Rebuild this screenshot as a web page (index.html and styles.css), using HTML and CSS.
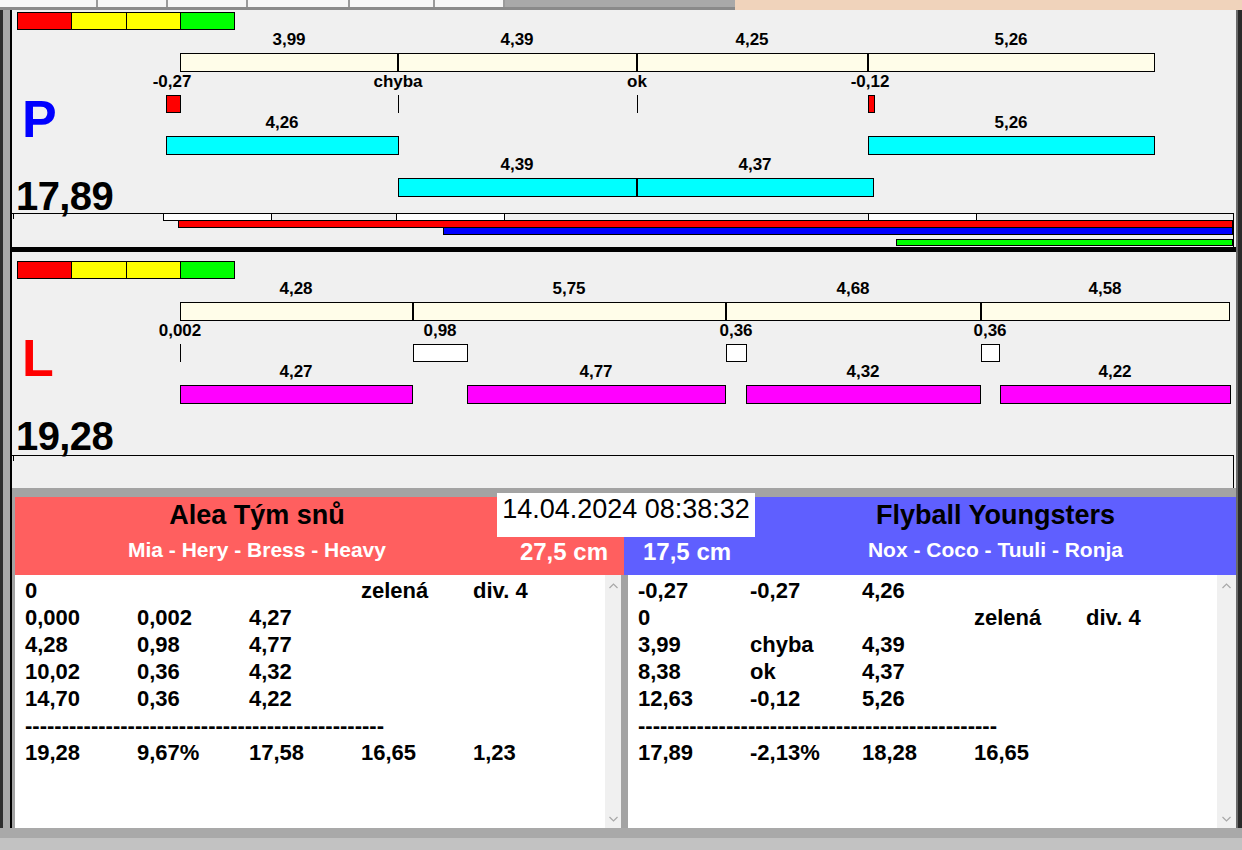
FILE: index.html
```html
<!DOCTYPE html>
<html lang="cs">
<head>
<meta charset="utf-8">
<title>Flyball</title>
<link rel="stylesheet" href="styles.css">
</head>
<body>
<div class="app">
  <div class="topbar">
    <div class="tabs">
      <div class="tab" style="width:98px"></div>
      <div class="tab" style="width:70px"></div>
      <div class="tab" style="width:80px"></div>
      <div class="tab" style="width:102px"></div>
      <div class="tab" style="width:85px"></div>
      <div class="tab" style="width:70px"></div>
      <div class="tab-rest"></div>
    </div>
    <div class="peach"></div>
  </div>

  <div class="mid">
    <div class="ledge"></div>
    <div class="main">

      <section class="lane lane-p">
        <div class="lane-body">
          <div class="legend"><span class="lg lg-red"></span><span class="lg lg-yel"></span><span class="lg lg-yel"></span><span class="lg lg-grn"></span></div>
          <div class="letter letter-p">P</div>
          <div class="time time-p">17,89</div>

          <div class="track p-a">
            <span class="lbl" style="left:277px">3,99</span>
            <span class="lbl" style="left:505px">4,39</span>
            <span class="lbl" style="left:740px">4,25</span>
            <span class="lbl" style="left:999px">5,26</span>
          </div>
          <div class="track p-cream">
            <span class="seg cream" style="left:168px;width:218px"></span>
            <span class="seg cream" style="left:386px;width:239px"></span>
            <span class="seg cream" style="left:625px;width:231px"></span>
            <span class="seg cream" style="left:856px;width:287px"></span>
          </div>
          <div class="track p-b">
            <span class="lbl" style="left:160px">-0,27</span>
            <span class="lbl" style="left:386px">chyba</span>
            <span class="lbl" style="left:625px">ok</span>
            <span class="lbl" style="left:858px">-0,12</span>
          </div>
          <div class="track p-mark">
            <span class="seg red" style="left:154px;width:15px"></span>
            <span class="tick" style="left:386px"></span>
            <span class="tick" style="left:625px"></span>
            <span class="seg red" style="left:856px;width:7px"></span>
          </div>
          <div class="track p-c">
            <span class="lbl" style="left:270px">4,26</span>
            <span class="lbl" style="left:999px">5,26</span>
          </div>
          <div class="track p-cyan1">
            <span class="seg cyan" style="left:154px;width:233px"></span>
            <span class="seg cyan" style="left:856px;width:287px"></span>
          </div>
          <div class="track p-d">
            <span class="lbl" style="left:505px">4,39</span>
            <span class="lbl" style="left:743px">4,37</span>
          </div>
          <div class="track p-cyan2">
            <span class="seg cyan" style="left:386px;width:239px"></span>
            <span class="seg cyan" style="left:625px;width:237px"></span>
          </div>
        </div>
        <div class="timeline tl-p">
          <span class="tl-tick"></span>
          <span class="tl-box" style="left:151px;width:109px"></span>
          <span class="tl-box" style="left:384px;width:109px"></span>
          <span class="tl-box" style="left:856px;width:109px"></span>
          <span class="tl-bar tl-red" style="left:166px"></span>
          <span class="tl-bar tl-blue" style="left:431px"></span>
          <span class="tl-bar tl-green" style="left:884px"></span>
        </div>
      </section>

      <div class="thick"></div>

      <section class="lane lane-l">
        <div class="lane-body">
          <div class="legend"><span class="lg lg-red"></span><span class="lg lg-yel"></span><span class="lg lg-yel"></span><span class="lg lg-grn"></span></div>
          <div class="letter letter-l">L</div>
          <div class="time time-l">19,28</div>

          <div class="track l-a">
            <span class="lbl" style="left:284px">4,28</span>
            <span class="lbl" style="left:557px">5,75</span>
            <span class="lbl" style="left:841px">4,68</span>
            <span class="lbl" style="left:1093px">4,58</span>
          </div>
          <div class="track l-cream">
            <span class="seg cream" style="left:168px;width:233px"></span>
            <span class="seg cream" style="left:401px;width:313px"></span>
            <span class="seg cream" style="left:714px;width:255px"></span>
            <span class="seg cream" style="left:969px;width:249px"></span>
          </div>
          <div class="track l-b">
            <span class="lbl" style="left:168px">0,002</span>
            <span class="lbl" style="left:428px">0,98</span>
            <span class="lbl" style="left:724px">0,36</span>
            <span class="lbl" style="left:978px">0,36</span>
          </div>
          <div class="track l-mark">
            <span class="tick" style="left:168px"></span>
            <span class="seg white" style="left:401px;width:55px"></span>
            <span class="seg white" style="left:714px;width:21px"></span>
            <span class="seg white" style="left:969px;width:19px"></span>
          </div>
          <div class="track l-c">
            <span class="lbl" style="left:284px">4,27</span>
            <span class="lbl" style="left:584px">4,77</span>
            <span class="lbl" style="left:851px">4,32</span>
            <span class="lbl" style="left:1103px">4,22</span>
          </div>
          <div class="track l-mag">
            <span class="seg magenta" style="left:168px;width:233px"></span>
            <span class="seg magenta" style="left:455px;width:259px"></span>
            <span class="seg magenta" style="left:734px;width:235px"></span>
            <span class="seg magenta" style="left:988px;width:231px"></span>
          </div>
        </div>
        <div class="timeline tl-l">
          <span class="tl-tick"></span>
        </div>
      </section>

      <div class="graysep"></div>

      <div class="heads">
        <div class="head head-red">
          <div class="team-name">Alea Tým snů</div>
          <div class="members">Mia - Hery - Bress - Heavy</div>
          <div class="cm cm-red">27,5 cm</div>
        </div>
        <div class="head head-blue">
          <div class="team-name">Flyball Youngsters</div>
          <div class="cm cm-blue">17,5 cm</div>
          <div class="members">Nox - Coco - Tuuli - Ronja</div>
        </div>
        <div class="datebox">14.04.2024 08:38:32</div>
      </div>

      <div class="datas">
        <div class="panel panel-left">
          <div class="rows">
            <div class="row"><span>0</span><span></span><span></span><span>zelená</span><span>div. 4</span></div>
            <div class="row"><span>0,000</span><span>0,002</span><span>4,27</span></div>
            <div class="row"><span>4,28</span><span>0,98</span><span>4,77</span></div>
            <div class="row"><span>10,02</span><span>0,36</span><span>4,32</span></div>
            <div class="row"><span>14,70</span><span>0,36</span><span>4,22</span></div>
            <div class="row dash">-------------------------------------------------</div>
            <div class="row"><span>19,28</span><span>9,67%</span><span>17,58</span><span>16,65</span><span>1,23</span></div>
          </div>
          <div class="sb sb-left">
            <svg class="arr" width="9" height="6" viewBox="0 0 9 6"><polyline points="0.5,5 4.5,1 8.5,5" fill="none" stroke="#a8a8a8" stroke-width="1.2"/></svg>
            <svg class="arr" width="9" height="6" viewBox="0 0 9 6"><polyline points="0.5,1 4.5,5 8.5,1" fill="none" stroke="#a8a8a8" stroke-width="1.2"/></svg>
          </div>
        </div>
        <div class="panel panel-right">
          <div class="rows">
            <div class="row"><span>-0,27</span><span>-0,27</span><span>4,26</span></div>
            <div class="row"><span>0</span><span></span><span></span><span>zelená</span><span>div. 4</span></div>
            <div class="row"><span>3,99</span><span>chyba</span><span>4,39</span></div>
            <div class="row"><span>8,38</span><span>ok</span><span>4,37</span></div>
            <div class="row"><span>12,63</span><span>-0,12</span><span>5,26</span></div>
            <div class="row dash">-------------------------------------------------</div>
            <div class="row"><span>17,89</span><span>-2,13%</span><span>18,28</span><span>16,65</span></div>
          </div>
          <div class="sb sb-right">
            <svg class="arr" width="9" height="6" viewBox="0 0 9 6"><polyline points="0.5,5 4.5,1 8.5,5" fill="none" stroke="#a8a8a8" stroke-width="1.2"/></svg>
            <svg class="arr" width="9" height="6" viewBox="0 0 9 6"><polyline points="0.5,1 4.5,5 8.5,1" fill="none" stroke="#a8a8a8" stroke-width="1.2"/></svg>
          </div>
        </div>
      </div>

    </div>
    <div class="redge"></div>
  </div>

  <div class="bottom"><div class="b1"></div><div class="b2"></div></div>
</div>
</body>
</html>
```

FILE: styles.css
```css
* { box-sizing: border-box; }
html, body { margin: 0; padding: 0; }
body {
  width: 1242px;
  height: 850px;
  overflow: hidden;
  background: #f0f0f0;
  font-family: "Liberation Sans", Arial, sans-serif;
  color: #000;
}
.app { width: 1242px; height: 850px; display: flex; flex-direction: column; }

/* top strip */
.topbar { height: 10px; flex: none; display: flex; background: #f0f0f0; }
.tabs {
  width: 735px;
  height: 10px;
  display: flex;
  border-bottom: 3px solid #8a8a8a;
}
.tab { height: 7px; background: #f6f6f6; border-right: 2px solid #9a9a9a; }
.tab-rest { flex: 1; height: 7px; background: #a9a9a9; }
.peach { flex: 1; height: 10px; background: #f0d3bb; }

/* middle frame */
.mid { height: 818px; flex: none; display: flex; }
.ledge {
  width: 12px;
  background: linear-gradient(to right, #2e2e2e 0 3px, #a9a9a9 3px 10px, #000 10px 12px);
}
.redge {
  width: 6px;
  background: linear-gradient(to right, #6a6a6a 0 2px, #2a2a2a 2px 6px);
}
.main { width: 1224px; display: flex; flex-direction: column; background: #f0f0f0; }
.main > * { flex: none; }

/* lanes */
.lane-body { position: relative; height: 203px; display: flow-root; }
.legend {
  width: 218px;
  height: 18px;
  margin-left: 5px;
  border: 1px solid #000;
  display: flex;
}
.lane-p .legend { margin-top: 2px; }
.lane-l .legend { margin-top: 9px; }
.lg { flex: 1; border-left: 1px solid #000; }
.lg:first-child { border-left: 0; }
.lg-red { background: #ff0000; }
.lg-yel { background: #ffff00; }
.lg-grn { background: #00ff00; }

.letter {
  font-weight: bold;
  font-size: 52px;
  line-height: 52px;
  margin-left: 10px;
}
.letter-p { color: #0000ff; margin-top: 63px; }
.letter-l { color: #ff0000; margin-top: 53px; }
.time {
  font-weight: bold;
  font-size: 40px;
  line-height: 34px;
  margin-left: 4px;
  letter-spacing: -0.6px;
}
.time-p { margin-top: 34px; }
.time-l { margin-top: 35px; }

.track { position: absolute; left: 0; right: 0; height: 20px; }
.p-a { top: 20px; }
.p-cream { top: 43px; height: 19px; }
.p-b { top: 62px; }
.p-mark { top: 85px; height: 18px; }
.p-c { top: 103px; }
.p-cyan1 { top: 126px; height: 19px; }
.p-d { top: 145px; }
.p-cyan2 { top: 168px; height: 19px; }

.l-a { top: 27px; }
.l-cream { top: 50px; height: 19px; }
.l-b { top: 69px; }
.l-mark { top: 92px; height: 18px; }
.l-c { top: 110px; }
.l-mag { top: 133px; height: 19px; }

.lbl {
  position: absolute;
  top: 0;
  transform: translateX(-50%);
  font-weight: bold;
  font-size: 17px;
  line-height: 20px;
  white-space: nowrap;
}
.seg { position: absolute; top: 0; bottom: 0; border: 1px solid #000; }
.cream { background: #fffde9; }
.cyan { background: #00ffff; }
.magenta { background: #ff00ff; }
.red { background: #ff0000; }
.white { background: #ffffff; }
.tick { position: absolute; top: 0; bottom: 0; width: 1px; background: #000; }

/* timelines */
.timeline {
  position: relative;
  margin-right: 2px;
  border-top: 1px solid #000;
  border-right: 1px solid #000;
}
.tl-p { height: 34px; }
.tl-l { height: 33px; }
.tl-tick { position: absolute; left: 1px; top: 0; width: 1px; height: 5px; background: #000; }
.tl-box {
  position: absolute;
  top: -1px;
  height: 8px;
  background: #fff;
  border: 1px solid #000;
}
.tl-bar { position: absolute; right: 0; border: 1px solid #000; }
.tl-red { top: 6px; height: 8px; background: #ff0000; }
.tl-blue { top: 13px; height: 8px; background: #0000ff; }
.tl-green { top: 25px; height: 7px; background: #00ff00; }

.thick { height: 5px; background: #000; }
.graysep { height: 9px; background: #a3a3a3; }

/* team headers */
.heads {
  position: relative;
  height: 78px;
  display: flex;
  padding-left: 3px;
  background: #a3a3a3;
}
.head { display: grid; grid-template-rows: 36px 34px; align-content: start; }
.head-red {
  width: 609px;
  background: #ff5f5f;
  grid-template-columns: 484px 1fr;
}
.head-blue {
  flex: 1;
  background: #5f5fff;
  grid-template-columns: 131px 1fr;
}
.team-name {
  font-weight: bold;
  font-size: 27px;
  line-height: 36px;
  text-align: center;
  white-space: nowrap;
}
.head-red .team-name { grid-column: 1; grid-row: 1; }
.head-blue .team-name { grid-column: 2; grid-row: 1; }
.members {
  grid-row: 2;
  color: #fff;
  font-weight: bold;
  font-size: 21px;
  line-height: 34px;
  text-align: center;
  white-space: nowrap;
}
.head-red .members { grid-column: 1; }
.head-blue .members { grid-column: 2; }
.cm {
  grid-row: 2;
  color: #fff;
  font-weight: bold;
  font-size: 24px;
  line-height: 34px;
  padding-top: 2px;
  white-space: nowrap;
}
.cm-red { grid-column: 2; text-align: right; padding-right: 16px; }
.cm-blue { grid-column: 1; padding-left: 19px; }

.datebox {
  position: absolute;
  left: 485px;
  top: -4px;
  width: 258px;
  height: 44px;
  background: #fff;
  font-size: 27px;
  line-height: 33px;
  text-align: center;
  white-space: nowrap;
}

/* data panels */
.datas {
  height: 253px;
  display: flex;
  gap: 7px;
  padding-left: 3px;
  background: #a3a3a3;
}
.panel { display: flex; background: #fff; }
.panel-left { width: 606px; }
.panel-right { flex: 1; }
.rows { flex: 1; padding: 2px 0 0 10px; }
.row {
  display: grid;
  grid-template-columns: repeat(5, 112px);
  height: 27px;
  font-weight: bold;
  font-size: 22px;
  line-height: 27px;
  white-space: nowrap;
}
.row.dash { display: block; }
.sb {
  background: #f0f0f0;
  display: flex;
  flex-direction: column;
  justify-content: space-between;
  align-items: center;
  padding: 8px 0 6px;
}
.sb-left { width: 16px; }
.sb-right { width: 19px; }
.arr { display: block; }

/* bottom strip */
.bottom { height: 22px; flex: none; display: flex; flex-direction: column; }
.b1 { height: 10px; background: #a9a9a9; }
.b2 { flex: 1; background: #c2c2c2; }
```
